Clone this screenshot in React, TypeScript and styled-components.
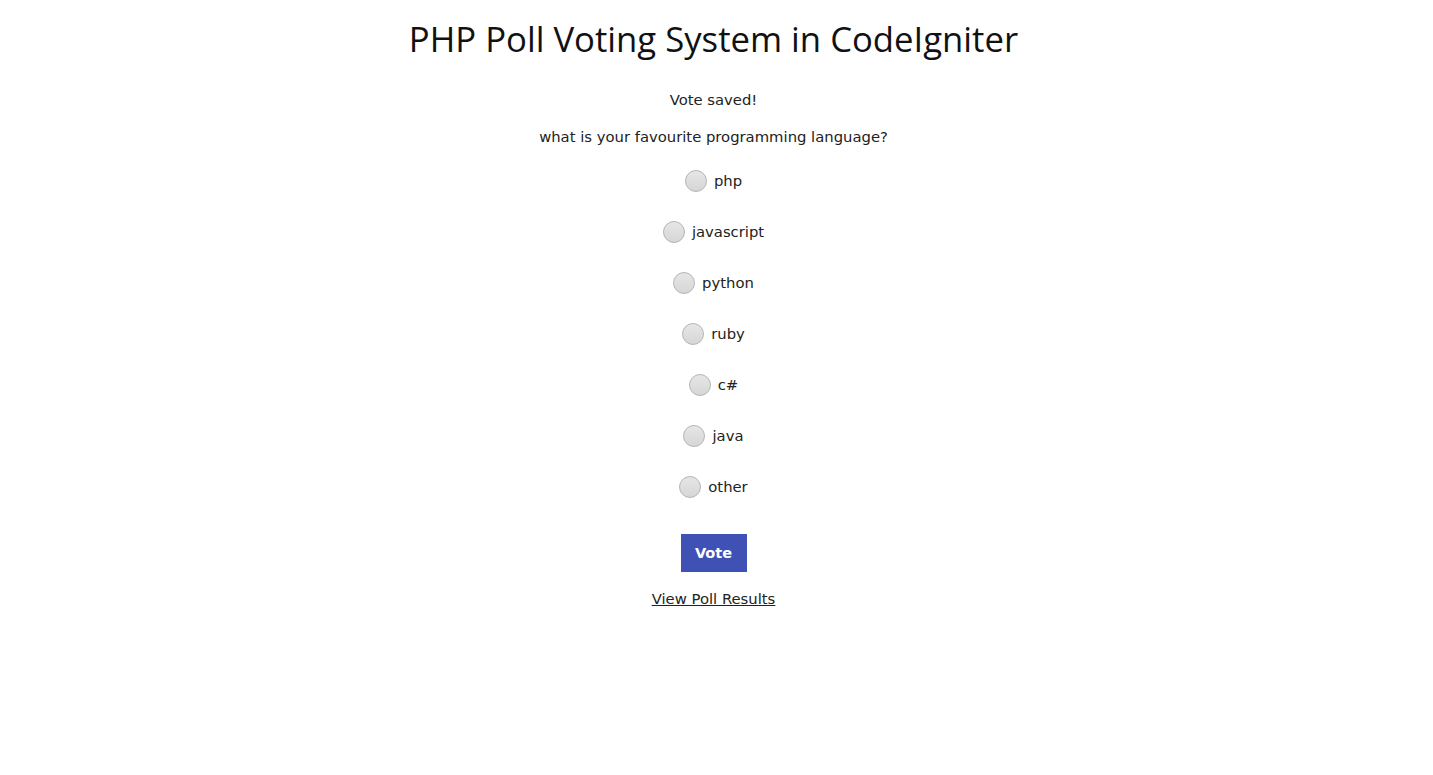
import React from "react";
import styled, { createGlobalStyle } from "styled-components";

const Global = createGlobalStyle`
  html, body { margin: 0; padding: 0; background: #fff; }
  body { font-family: "DejaVu Sans", Verdana, sans-serif; color: #222; }
`;

const Page = styled.div`
  display: flex;
  flex-direction: column;
  align-items: center;
  padding: 16px 6px 0 0;
`;

const Title = styled.h1`
  margin: 0;
  font-family: "Open Sans", "Noto Sans", sans-serif;
  font-weight: 400;
  font-size: 34.7px;
  line-height: 46px;
  color: #111;
`;

const Message = styled.p`
  margin: 28px 0 0;
  font-size: 14.8px;
  line-height: 20px;
`;

const Question = styled.p`
  margin: 17px 0 0;
  font-size: 14.8px;
  line-height: 20px;
`;

const Form = styled.form`
  display: flex;
  flex-direction: column;
  align-items: center;
  margin-top: 22px;
`;

const Options = styled.div`
  display: flex;
  flex-direction: column;
  align-items: center;
  gap: 27px;
`;

const Option = styled.label`
  display: flex;
  align-items: center;
  gap: 7px;
  font-size: 14.8px;
  line-height: 24px;
  cursor: pointer;
`;

const Radio = styled.input`
  appearance: none;
  margin: 0;
  width: 22px;
  height: 22px;
  border-radius: 50%;
  border: 1px solid #b5b5b5;
  background: linear-gradient(#e6e6e6, #d6d6d6);
  box-sizing: border-box;
`;

const Button = styled.button`
  margin-top: 35px;
  width: 66px;
  height: 38px;
  border: none;
  background: #3f51b5;
  color: #fff;
  font-family: "DejaVu Sans", Verdana, sans-serif;
  font-weight: 700;
  font-size: 14.5px;
  cursor: pointer;
`;

const Link = styled.a`
  margin-top: 17px;
  font-size: 14.8px;
  line-height: 20px;
  color: #222;
  text-decoration: underline;
`;

const options = ["php", "javascript", "python", "ruby", "c#", "java", "other"];

export default function App() {
  return (
    <>
      <Global />
      <Page>
        <Title>PHP Poll Voting System in CodeIgniter</Title>
        <Message>Vote saved!</Message>
        <Question>what is your favourite programming language?</Question>
        <Form onSubmit={(e) => e.preventDefault()}>
          <Options>
            {options.map((o) => (
              <Option key={o}>
                <Radio type="radio" name="lang" value={o} />
                {o}
              </Option>
            ))}
          </Options>
          <Button type="submit">Vote</Button>
        </Form>
        <Link href="#">View Poll Results</Link>
      </Page>
    </>
  );
}
